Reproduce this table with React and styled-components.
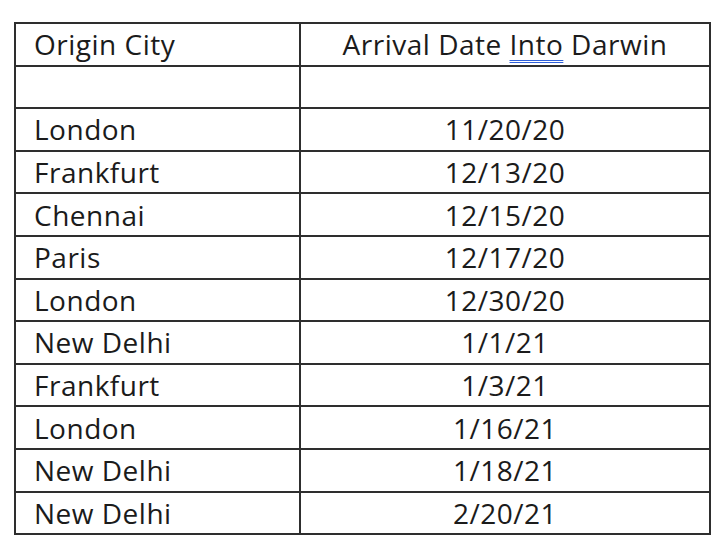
import React from 'react';
import styled, { createGlobalStyle } from 'styled-components';

const GlobalStyle = createGlobalStyle`
  body {
    margin: 0;
    background: #ffffff;
    font-family: "Open Sans", "Noto Sans", sans-serif;
  }
`;

const Page = styled.div`
  padding: 22px 0 0 14px;
`;

const Table = styled.table`
  width: 697px;
  border-collapse: collapse;
  table-layout: fixed;
  color: #1b1b1b;
  font-size: 28px;
  letter-spacing: 0.5px;
`;

const Row = styled.tr`
  height: 42.6px;
`;

const Cell = styled.td`
  border: 2px solid #2e2e2e;
  padding: 0 0 0 18px;
  text-align: ${(props) => (props.$center ? 'center' : 'left')};
  vertical-align: middle;
  white-space: nowrap;
  line-height: 1;
  ${(props) => props.$center && 'padding: 0;'}
`;

const Marked = styled.span`
  text-decoration-line: underline;
  text-decoration-style: double;
  text-decoration-color: #3060d8;
  text-decoration-thickness: 1px;
  text-underline-offset: 5px;
`;

const arrivals = [
  ['London', '11/20/20'],
  ['Frankfurt', '12/13/20'],
  ['Chennai', '12/15/20'],
  ['Paris', '12/17/20'],
  ['London', '12/30/20'],
  ['New Delhi', '1/1/21'],
  ['Frankfurt', '1/3/21'],
  ['London', '1/16/21'],
  ['New Delhi', '1/18/21'],
  ['New Delhi', '2/20/21'],
];

const App = () => (
  <Page>
    <GlobalStyle />
    <Table>
      <colgroup>
        <col style={{ width: '285px' }} />
        <col />
      </colgroup>
      <tbody>
        <Row>
          <Cell>Origin City</Cell>
          <Cell $center>
            Arrival Date <Marked>Into</Marked> Darwin
          </Cell>
        </Row>
        <Row>
          <Cell />
          <Cell $center />
        </Row>
        {arrivals.map(([city, date], i) => (
          <Row key={i}>
            <Cell>{city}</Cell>
            <Cell $center>{date}</Cell>
          </Row>
        ))}
      </tbody>
    </Table>
  </Page>
);

export default App;
